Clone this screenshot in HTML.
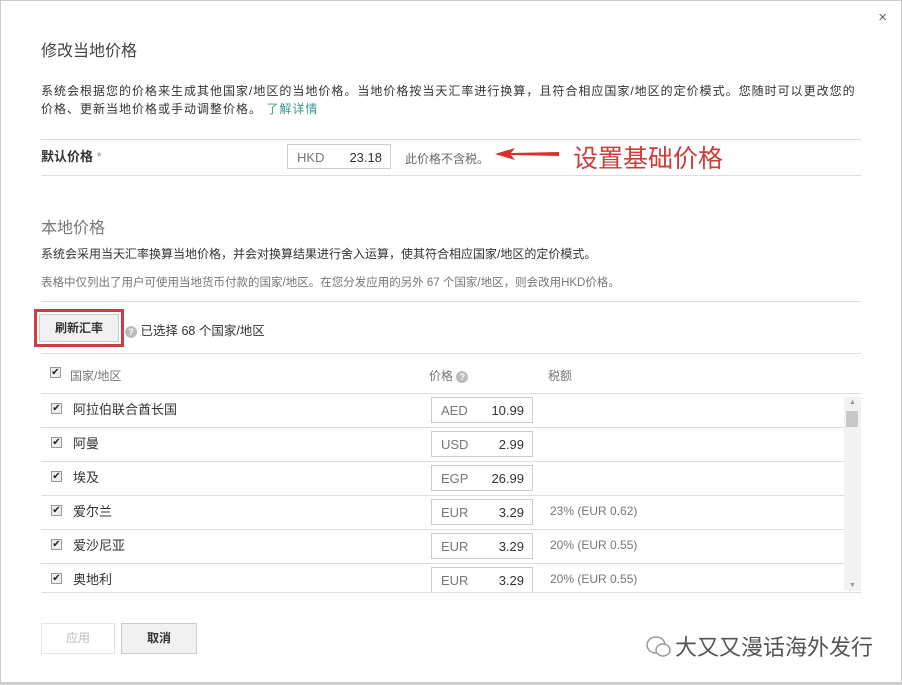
<!DOCTYPE html>
<html><head><meta charset="utf-8"><style>
*{margin:0;padding:0;box-sizing:border-box}
body{width:902px;height:685px;background:#fff;font-family:"Liberation Sans","Noto Sans CJK SC",sans-serif;color:#333;position:relative;overflow:hidden;border:1px solid #ccc;border-bottom:3px solid #ccc}
.a{position:absolute;white-space:nowrap}
.hr{position:absolute;left:40px;width:820px;height:1px;background:#ddd}
.cb{position:absolute;width:11px;height:11px;border:1px solid #999;background:#eee;font-size:10px;line-height:9px;text-align:center;color:#222}
.inp{position:absolute;left:430px;width:102px;height:26px;border:1px solid #ccc;font-size:13px}
.inp span{position:absolute;top:5px}
.q{display:inline-block;width:12px;height:12px;border-radius:50%;background:#bbb;color:#fff;font-size:9px;line-height:12px;text-align:center;font-weight:bold;vertical-align:middle}
.r{font-size:13px}
</style></head><body>
<div class="a" style="right:14px;top:8px;font-size:15px;color:#666">×</div>
<div class="a" style="left:40px;top:36px;font-size:16px;color:#444">修改当地价格</div>
<div class="a" style="left:40px;top:81px;font-size:12px;line-height:18px;letter-spacing:1px">系统会根据您的价格来生成其他国家/地区的当地价格。当地价格按当天汇率进行换算，且符合相应国家/地区的定价模式。您随时可以更改您的<br>价格、更新当地价格或手动调整价格。 <span style="color:#3a9a90">了解详情</span></div>
<div class="hr" style="top:138px"></div>
<div class="a" style="left:40px;top:145px;font-size:13px;font-weight:bold">默认价格 <span style="color:#999;font-weight:normal">*</span></div>
<div class="inp" style="left:286px;top:143px;width:104px;height:25px"><span style="left:9px;color:#777">HKD</span><span style="right:8px">23.18</span></div>
<div class="a" style="left:404px;top:149px;font-size:12px;color:#666">此价格不含税。</div>
<svg class="a" style="left:494px;top:145px" width="66" height="16"><polygon points="0,8 20,2 16,7 64,6 64,10 16,9 20,14" fill="#d9302c"/></svg>
<div class="a" style="left:572px;top:138px;font-size:25px;color:#d03a3a">设置基础价格</div>
<div class="hr" style="top:174px"></div>
<div class="a" style="left:40px;top:213px;font-size:16px;color:#777">本地价格</div>
<div class="a" style="left:40px;top:244px;font-size:12px">系统会采用当天汇率换算当地价格，并会对换算结果进行舍入运算，使其符合相应国家/地区的定价模式。</div>
<div class="a" style="left:40px;top:273px;font-size:11.5px;color:#777">表格中仅列出了用户可使用当地货币付款的国家/地区。在您分发应用的另外 67 个国家/地区，则会改用HKD价格。</div>
<div class="hr" style="top:300px"></div>
<div class="a" style="left:33px;top:308px;width:90px;height:38px;border:3px solid #c8403f"><div style="position:absolute;left:2px;top:2px;right:2px;bottom:2px;background:#f1f1f1;border:1px solid #ccc;font-size:12px;font-weight:bold;text-align:center;line-height:26px">刷新汇率</div></div>
<div class="a" style="left:124px;top:319px;font-size:12.5px"><span class="q">?</span> 已选择 68 个国家/地区</div>
<div class="hr" style="top:352px"></div>
<div class="cb" style="left:49px;top:366px">✔</div>
<div class="a" style="left:69px;top:366px;font-size:12px;color:#777">国家/地区</div>
<div class="a" style="left:428px;top:366px;font-size:12px;color:#777">价格 <span class="q">?</span></div>
<div class="a" style="left:547px;top:366px;font-size:12px;color:#777">税额</div>
<div class="hr" style="top:392px"></div>
<div class="a" style="left:843px;top:396px;width:17px;height:194px;background:#f2f2f2"><div style="position:absolute;left:2px;top:14px;width:12px;height:16px;background:#c8c8c8"></div><div style="position:absolute;left:5px;top:2px;font-size:7px;color:#999">▲</div><div style="position:absolute;left:5px;bottom:2px;font-size:7px;color:#999">▼</div></div>

<div class="cb" style="left:50px;top:402px">✔</div><div class="a r" style="left:72px;top:398px">阿拉伯联合酋长国</div>
<div class="inp" style="top:396px"><span style="left:9px;color:#777">AED</span><span style="right:8px">10.99</span></div>
<div class="hr" style="top:426px;width:803px"></div>
<div class="cb" style="left:50px;top:436px">✔</div><div class="a r" style="left:72px;top:432px">阿曼</div>
<div class="inp" style="top:430px"><span style="left:9px;color:#777">USD</span><span style="right:8px">2.99</span></div>
<div class="hr" style="top:460px;width:803px"></div>
<div class="cb" style="left:50px;top:470px">✔</div><div class="a r" style="left:72px;top:466px">埃及</div>
<div class="inp" style="top:464px"><span style="left:9px;color:#777">EGP</span><span style="right:8px">26.99</span></div>
<div class="hr" style="top:494px;width:803px"></div>
<div class="cb" style="left:50px;top:504px">✔</div><div class="a r" style="left:72px;top:500px">爱尔兰</div>
<div class="inp" style="top:498px"><span style="left:9px;color:#777">EUR</span><span style="right:8px">3.29</span></div>
<div class="a" style="left:549px;top:503px;font-size:12px;color:#777">23% (EUR 0.62)</div>
<div class="hr" style="top:528px;width:803px"></div>
<div class="cb" style="left:50px;top:538px">✔</div><div class="a r" style="left:72px;top:534px">爱沙尼亚</div>
<div class="inp" style="top:532px"><span style="left:9px;color:#777">EUR</span><span style="right:8px">3.29</span></div>
<div class="a" style="left:549px;top:537px;font-size:12px;color:#777">20% (EUR 0.55)</div>
<div class="hr" style="top:562px;width:803px"></div>
<div class="cb" style="left:50px;top:572px">✔</div><div class="a r" style="left:72px;top:568px">奥地利</div>
<div class="inp" style="top:566px"><span style="left:9px;color:#777">EUR</span><span style="right:8px">3.29</span></div>
<div class="a" style="left:549px;top:571px;font-size:12px;color:#777">20% (EUR 0.55)</div>
<div class="hr" style="top:591px"></div>

<div class="a" style="left:40px;top:622px;width:74px;height:31px;border:1px solid #e4e4e4;font-size:12px;color:#bbb;text-align:center;line-height:29px">应用</div>
<div class="a" style="left:120px;top:622px;width:76px;height:31px;border:1px solid #ccc;background:#f1f1f1;font-size:12px;font-weight:bold;text-align:center;line-height:29px">取消</div>
<svg class="a" style="left:643px;top:630px" width="28" height="30"><ellipse cx="12" cy="14" rx="9" ry="8" fill="none" stroke="#999" stroke-width="1.5"/><ellipse cx="19" cy="19" rx="7" ry="6" fill="#fff" stroke="#999" stroke-width="1.5"/></svg>
<div class="a" style="left:674px;top:629px;font-size:22px;color:#555">大又又漫话海外发行</div>
</body></html>
